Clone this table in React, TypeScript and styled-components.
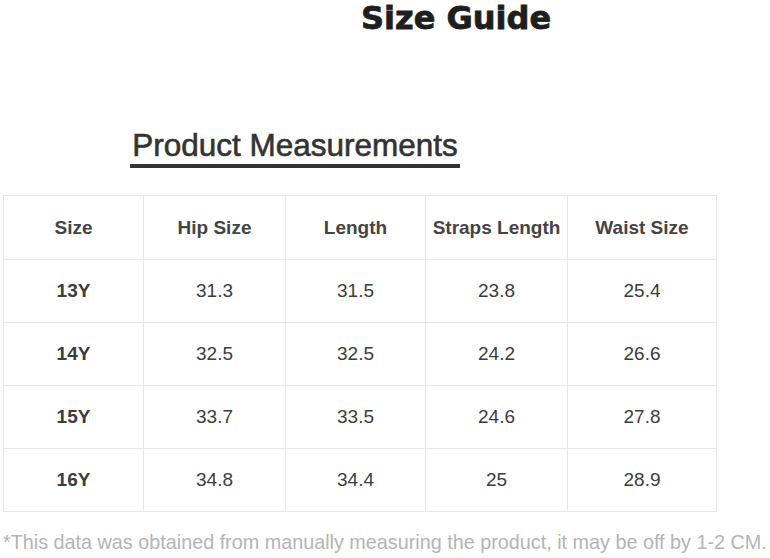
import styled, { createGlobalStyle } from "styled-components";

const GlobalStyle = createGlobalStyle`
  html, body {
    margin: 0;
    padding: 0;
    background: #fff;
  }
  body {
    font-family: "Liberation Sans", Arial, sans-serif;
  }
`;

const Page = styled.div`
  width: 770px;
  height: 558px;
  overflow: hidden;
  display: flex;
  flex-direction: column;
`;

const Title = styled.h1`
  margin: 0;
  padding-left: 361px;
  font-family: "DejaVu Sans", sans-serif;
  font-weight: bold;
  font-size: 32px;
  line-height: 36px;
  color: #1e1e1e;
  -webkit-text-stroke: 0.8px #1e1e1e;
`;

const SubHeading = styled.h2`
  margin: 94px 0 0 130px;
  width: 330px;
  text-align: center;
  font-size: 31.5px;
  line-height: 31px;
  font-weight: normal;
  color: #333;
  -webkit-text-stroke: 0.6px #333;
  padding-bottom: 3px;
  border-bottom: 4px solid #333;
`;

const Table = styled.table`
  margin: 27px 0 0 3px;
  width: 713px;
  border-collapse: collapse;
  table-layout: fixed;
`;

const Cell = styled.td<{ $bold?: boolean }>`
  height: 62px;
  padding: 0;
  border: 1px solid #e8e8e8;
  text-align: center;
  vertical-align: middle;
  font-size: 19px;
  color: #3c3c3c;
  font-weight: ${(p) => (p.$bold ? "bold" : "normal")};
`;

const HeadCell = styled(Cell).attrs({ as: "th" })`
  height: 63px;
  color: #444;
`;

const Note = styled.p`
  margin: 19px 0 0 3px;
  font-size: 19.8px;
  line-height: 22px;
  color: #b4b4b4;
  white-space: nowrap;
`;

const columnWidths = [140, 142, 140, 142, 149];

const headers = ["Size", "Hip Size", "Length", "Straps Length", "Waist Size"];

const rows = [
  ["13Y", "31.3", "31.5", "23.8", "25.4"],
  ["14Y", "32.5", "32.5", "24.2", "26.6"],
  ["15Y", "33.7", "33.5", "24.6", "27.8"],
  ["16Y", "34.8", "34.4", "25", "28.9"],
];

const App = () => {
  return (
    <Page>
      <GlobalStyle />
      <Title>Size Guide</Title>
      <SubHeading>Product Measurements</SubHeading>
      <Table>
        <colgroup>
          {columnWidths.map((w, i) => (
            <col key={i} style={{ width: w }} />
          ))}
        </colgroup>
        <thead>
          <tr>
            {headers.map((h) => (
              <HeadCell key={h} $bold>
                {h}
              </HeadCell>
            ))}
          </tr>
        </thead>
        <tbody>
          {rows.map((row) => (
            <tr key={row[0]}>
              {row.map((v, i) => (
                <Cell key={i} $bold={i === 0}>
                  {v}
                </Cell>
              ))}
            </tr>
          ))}
        </tbody>
      </Table>
      <Note>
        *This data was obtained from manually measuring the product, it may be
        off by 1-2 CM.
      </Note>
    </Page>
  );
};

export default App;
